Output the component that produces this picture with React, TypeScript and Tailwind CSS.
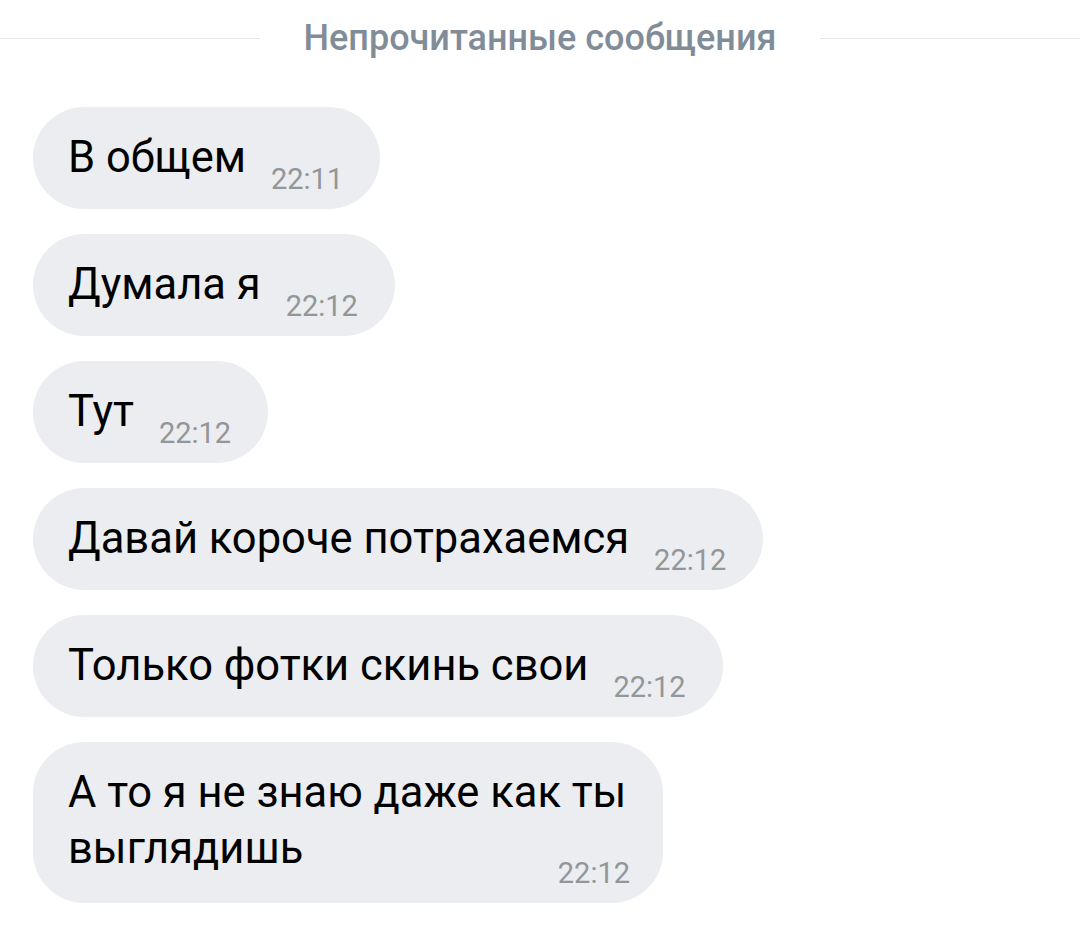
const messages = [
  { text: "В общем", time: "22:11" },
  { text: "Думала я", time: "22:12" },
  { text: "Тут", time: "22:12" },
  { text: "Давай короче потрахаемся", time: "22:12" },
  { text: "Только фотки скинь свои", time: "22:12" },
  { text: "А то я не знаю даже как ты выглядишь", time: "22:12", multi: true },
];

function Bubble({ text, time, multi }: { text: string; time: string; multi?: boolean }) {
  if (multi) {
    // time floats at the end of the last line, like the app does
    return (
      <div className="flex flex-col rounded-[51px] bg-[#ebedf0] pb-[13px] pl-[35px] pr-[33px] pt-[23px]">
        <p className="max-w-[562px] text-[43.5px] leading-[56px] text-black">
          {text}
          <span className="float-right ml-[25px] mt-[35px] text-[29px] leading-[34px] text-[#939699]">
            {time}
          </span>
        </p>
      </div>
    );
  }
  return (
    <div className="flex items-end rounded-[51px] bg-[#ebedf0] pb-[23px] pl-[35px] pr-[37px] pt-[23px]">
      <p className="text-[43.5px] leading-[56px] text-black">{text}</p>
      <span className="-mb-[10px] ml-[25px] shrink-0 text-[29px] leading-[34px] text-[#939699]">
        {time}
      </span>
    </div>
  );
}

export default function App() {
  return (
    <main className="min-h-screen bg-white font-['Roboto',sans-serif]">
      <div className="flex items-center pt-[17px]">
        <div className="h-px flex-1 bg-[#e7e8ec]" />
        <span className="px-[44px] text-[36px] font-medium leading-[42px] text-[#818c99]">
          Непрочитанные сообщения
        </span>
        <div className="h-px flex-1 bg-[#e7e8ec]" />
      </div>

      <div className="flex flex-col items-start gap-[25px] pl-[33px] pt-[48px]">
        {messages.map((m, i) => (
          <Bubble key={i} text={m.text} time={m.time} multi={m.multi} />
        ))}
      </div>
    </main>
  );
}
